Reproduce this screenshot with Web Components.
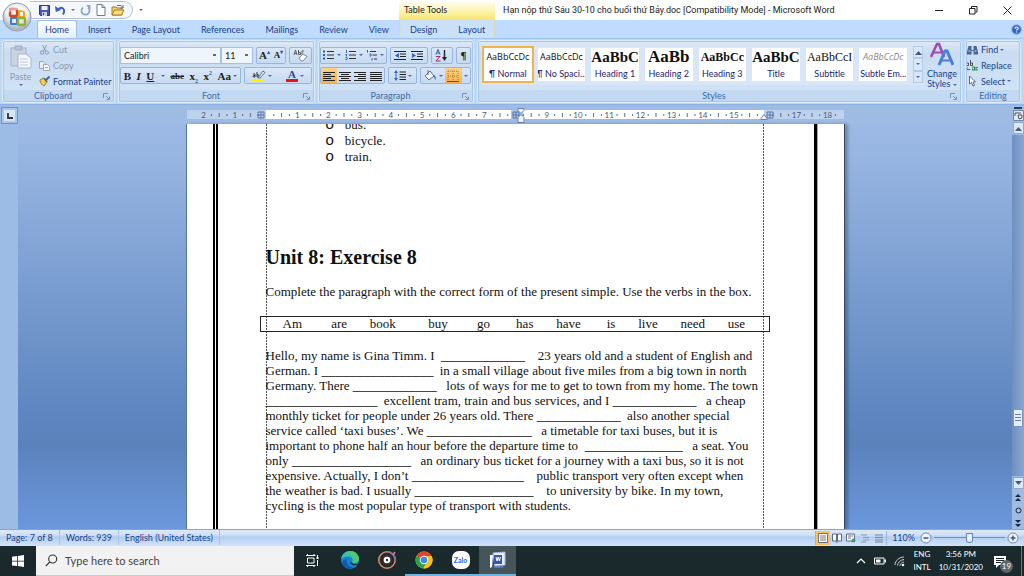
<!DOCTYPE html>
<html lang="en">
<head>
<meta charset="utf-8">
<title>Microsoft Word</title>
<style>
  html, body {
    margin: 0;
    height: 100%;
  }

  body {
    overflow: hidden;
    font-family: Lato, "Open Sans", sans-serif;
    font-size: 9px;
    color: #15428b;
  }
</style>
</head>
<body>
<word-desktop></word-desktop>

<script>
const svg = (w, h, body) => /* html */ `<svg width="${w}" height="${h}" viewBox="0 0 ${w} ${h}" fill="none" aria-hidden="true">${body}</svg>`;
const lines = (w, list, color = '#222') => svg(w, 10, list.map(([x1, x2], i) => `<path d="M${x1} ${i * 2 + 1.5}H${x2}" stroke="${color}" stroke-width="1"/>`).join(''));

const ICONS = {
  office: svg(32, 32, `
    <defs><radialGradient id="g" cx=".5" cy=".3" r=".75"><stop stop-color="#fff"/><stop offset=".55" stop-color="#e3e6ea"/><stop offset=".85" stop-color="#a9b2bf"/><stop offset="1" stop-color="#eef3f8"/></radialGradient></defs>
    <circle cx="16" cy="16" r="14" fill="url(#g)" stroke="#8c9aae"/>
    <g stroke-width="2.4" stroke-linejoin="round">
      <rect x="9" y="8" width="7" height="7" rx="1" stroke="#d8421c"/>
      <path d="M18 10h5v6h-5z" stroke="#f2a01e" stroke-width="2"/>
      <path d="M10 17h6v6h-6z" stroke="#3b7fd0" stroke-width="2"/>
      <rect x="17" y="17" width="7" height="7" rx="1" stroke="#8fb52d"/>
    </g>
    <path d="M5 13a12 9 0 0 1 22 0" stroke="#fff" stroke-opacity=".5" stroke-width="3"/>`),
  save: svg(11, 11, '<path d="M.5.5h10v10h-9l-1-1z" fill="#4a55b8" stroke="#2d3590"/><path d="M2.500 1h6v4h-6z" fill="#eef2fb"/><path d="M3 7h5v4H3z" fill="#c9cfe4"/><path d="M4 8h1v2H4z" fill="#2d3590"/>'),
  undo: svg(11, 11, '<path d="M3 4.500C7 1 11 4 8 9.500" stroke="#3b62bd" stroke-width="2"/><path d="M0 1l.8 6L6 5z" fill="#3b62bd"/>'),
  redo: svg(11, 11, '<path d="M3 2.500a4 4 0 1 0 5 0" stroke="#8ba6d0" stroke-width="1.800"/><path d="M6 0h4.500v4.500z" fill="#8ba6d0"/>'),
  page: svg(10, 12, '<path d="M1 .5h5l3 3v8H1z" fill="#fff" stroke="#6d7c92"/><path d="M6 .5v3h3" stroke="#6d7c92"/>'),
  open: svg(14, 12, '<path d="M1 3h4l1 1h5v7H1z" fill="#f6cf6a" stroke="#a77b22"/><path d="M1 11l2.500-5H13l-2.500 5z" fill="#fde08a" stroke="#a77b22"/><path d="M6 1.500h4l2 2M12 1v3H9.500" stroke="#5a6f94"/>'),
  paste: svg(22, 24, '<path d="M1 3h15v18H1z" fill="#c9d3e2" stroke="#a6b4c9"/><path d="M5 1h7v4H5z" fill="#b6c2d4" stroke="#a0aec3"/><path d="M8 9h8l5 4v10H8z" fill="#f3f6fb" stroke="#a9b6c9"/><path d="M10 14h8M10 17h8M10 20h8" stroke="#c2ccda"/>'),
  cut: svg(10, 10, '<path d="M3 0l3 6M7 0L4 6" stroke="#8a99af"/><circle cx="2.500" cy="7.500" r="1.700" stroke="#8a99af"/><circle cx="7.300" cy="7.500" r="1.700" stroke="#8a99af"/>'),
  copy: svg(11, 10, '<path d="M.5.5h4l1.500 2v5H.5z" fill="#e8eef7" stroke="#9aa9be"/><path d="M4.500 3.500h4l2 2v4h-6z" fill="#f5f8fc" stroke="#9aa9be"/><path d="M6 6.500h3" stroke="#9aa9be"/>'),
  painter: svg(11, 11, '<path d="M1 4l4-2 3 4-3 4C3 9 1 7 1 4z" fill="#f2cd5c" stroke="#a97e1f"/><path d="M5 2l3 4" stroke="#666" stroke-width="1.500"/><path d="M7 4l3.500-3.500" stroke="#3c62a8" stroke-width="2"/>'),
  eraser: svg(15, 13, '<path d="M1 6l1.500-5L4 6M1.500 4.500h2M5.500 1v4.500M5.500 3.500h2v2h-2M11 2H9v3.500h2" stroke="#555" stroke-width=".9"/><path d="M6 9l4-4 4 2.500-4 4.500H8z" fill="#fff" stroke="#7a879b"/>'),
  highlight: svg(14, 12, '<path d="M0 9h11v3H0z" fill="#fdf400"/><path d="M6 8l5-7 2 1.500L8 8z" fill="#f5f8ff" stroke="#4f6694"/><path d="M1 4.500c1-1 2-1 2 0v2.500H1.500c-1-1 0-1.700 1.500-1.500M5 2v5M5 5c2-2 2 2 0 2" stroke="#222" stroke-width=".9"/>'),
  bullets: svg(12, 10, '<path d="M0 1.500h2M0 5h2M0 8.500h2" stroke="#2f5aa8" stroke-width="2"/><path d="M4 1.500h7M4 5h7M4 8.500h7" stroke="#333"/>'),
  numbering: svg(12, 10, '<path d="M1.500 0v3M.5 4.500h1.500l-1 1.500h1M.5 7.500h1.500v2H.5" stroke="#2f5aa8" stroke-width=".9"/><path d="M4 1.500h7M4 5h7M4 8.500h7" stroke="#333"/>'),
  multilevel: svg(12, 11, '<path d="M1.500 0v2.500M3.500 4h1.500v2H3.500M6 8v2.500" stroke="#2f5aa8"/><path d="M4 1.500h6M6.500 5H11M8 9h3" stroke="#333"/>'),
  outdent: svg(13, 11, '<path d="M0 1.500h12M6 4h6M6 6.500h6M0 9.500h12" stroke="#222" stroke-width="1.200"/><path d="M5 3L1 5.500 5 8z" fill="#3566bd"/>'),
  indent: svg(13, 11, '<path d="M0 1.500h12M6 4h6M6 6.500h6M0 9.500h12" stroke="#222" stroke-width="1.200"/><path d="M1 3l4 2.500L1 8z" fill="#3566bd"/>'),
  sort: svg(13, 13, '<path d="M1 5.500L3 .5l2 5M1.800 4h2.400" stroke="#2f5aa8"/><path d="M1 7.500h4l-4 4.500h4.500" stroke="#a02f63"/><path d="M9.500 1v9" stroke="#222" stroke-width="1.400"/><path d="M7 8l2.500 4L12 8z" fill="#222"/>'),
  left: lines(12, [[0, 12], [0, 8], [0, 12], [0, 8], [0, 12]]),
  center: lines(12, [[0, 12], [2, 10], [0, 12], [2, 10], [0, 12]]),
  right: lines(12, [[0, 12], [4, 12], [0, 12], [4, 12], [0, 12]]),
  justify: lines(12, [[0, 12], [0, 12], [0, 12], [0, 12], [0, 12]]),
  spacing: svg(12, 11, '<path d="M2 2v7" stroke="#3566bd"/><path d="M0 3l2-3 2 3zM0 8l2 3 2-3z" fill="#3566bd"/><path d="M5.500 2H12M5.500 4.500H12M5.500 7H12M5.500 9.500H12" stroke="#222"/>'),
  shading: svg(14, 11, '<path d="M2 6l5-5 4 5-5 4z" fill="#f3f6fb" stroke="#5e6d85"/><path d="M5 0v5" stroke="#5e6d85"/><path d="M11 5c2 1 2 3 1.500 5C11 8 11 7 11 5z" fill="#3d6cc0"/>'),
  borders: svg(12, 12, '<path d="M1 1h10M1 6h10M1 1v10M6 1v10M11 1v10" stroke="#a8752b" stroke-dasharray="1 1"/><path d="M0 11.500h12" stroke="#7a4a10"/>'),
  styles: svg(24, 26, '<path d="M1 15L7 2h2l5 13" stroke="#a04bb5" stroke-width="2.600"/><path d="M4 10.500h7" stroke="#a04bb5" stroke-width="2"/><path d="M9 23l6-14h2l6 14" stroke="#4a7fd2" stroke-width="3"/><path d="M12 18.500h8" stroke="#4a7fd2" stroke-width="2"/>'),
  find: svg(12, 10, '<path d="M2 1h3v4H7V1h3l1.500 6v2.500H7V6H5v3.500H.5V7z" fill="#4a6394"/><path d="M2 6h2M8 6h2" stroke="#dce8f8"/>'),
  replace: svg(13, 11, '<path d="M0 3h2.500v2.500H.5V4.500M4.500 0v5.500h2v-2.500h-2" stroke="#444" stroke-width=".9"/><path d="M1 7v2.500h3" stroke="#3566bd"/><path d="M6 7h2.500v3H6.500V8.500M12 7.500h-2V10h2" stroke="#2c8a4b" stroke-width="1.100"/>'),
  select: svg(10, 12, '<path d="M2 1v8l2-1.500L5.500 11 7 10.500 5.500 7H8z" fill="#fff" stroke="#5d6e8c"/>'),
  launcher: svg(7, 7, '<path d="M.5 5V.5H5" stroke="#7592bd"/><path d="M3 3l3 3M6.500 3.500v3h-3" stroke="#7592bd"/>'),
  help: svg(11, 11, '<circle cx="5.500" cy="5.500" r="4.800" fill="#2f66c4" stroke="#91b3e8"/><path d="M4 4.500c0-2 3.200-2 3.200 0 0 1-1.700 1-1.700 2M5.500 7.500v1" stroke="#fff" stroke-width="1.200"/>'),
  minimize: svg(9, 9, '<path d="M0 4.500h8" stroke="#222"/>'),
  restore: svg(9, 9, '<path d="M.5 2.500h5.500v5.500H.500zM2.500 2V.5H8V6H6.500" stroke="#222"/>'),
  close: svg(9, 9, '<path d="M.5.500l8 8M8.500.5l-8 8" stroke="#222"/>'),
  tabstop: svg(6, 6, '<path d="M1 0v5h5" stroke="#333" stroke-width="1.800"/>'),
  rulerToggle: svg(11, 11, '<path d="M.5.500h10v10H.500z" fill="#dfe9f6" stroke="#6e87ad"/><path d="M2 3h6M2 3v3M5 5h4v3L6 9z" stroke="#555"/>'),
  up: svg(7, 5, '<path d="M0 5l3.500-4L7 5z" fill="#46597d"/>'),
  down: svg(7, 5, '<path d="M0 0l3.500 4L7 0z" fill="#46597d"/>'),
  prev: svg(6, 7, '<path d="M0 3l3-3 3 3zM0 7l3-3 3 3z" fill="#1c2638"/>'),
  next: svg(6, 7, '<path d="M0 0l3 3 3-3zM0 4l3 3 3-3z" fill="#1c2638"/>'),
  browse: svg(7, 7, '<circle cx="3.500" cy="3.500" r="2.500" fill="#aebbd0" stroke="#1c2638"/>'),
  print: svg(10, 10, '<path d="M.5.500h9v9h-9z" fill="#fff" stroke="#66707f"/><path d="M2 3h6M2 5h6M2 7h6" stroke="#777"/>'),
  reading: svg(10, 10, '<path d="M.5 1h4v7h-4zM5.500 1h4v7h-4z" fill="#fff" stroke="#5a6b8a"/><path d="M5 8v2" stroke="#5a6b8a"/>'),
  web: svg(10, 10, '<path d="M.5 1h8v7h-8z" fill="#fff" stroke="#5a6b8a"/><path d="M2 3h5M2 5h3" stroke="#777"/><circle cx="7.500" cy="7.500" r="2" fill="#3a9c68"/>'),
  outline: svg(10, 10, '<path d="M1 2h6M3 4.500h6M3 7h6M1 9h5" stroke="#8d99ad"/>'),
  draft: svg(10, 10, '<path d="M1 2h8M1 4.500h8M1 7h8M1 9h8" stroke="#76849c"/>'),
  minus: svg(12, 12, '<circle cx="6" cy="6" r="5" fill="#f1f6fd" stroke="#6f87ae"/><path d="M3.500 6h5" stroke="#3c5582" stroke-width="1.500"/>'),
  plus: svg(12, 12, '<circle cx="6" cy="6" r="5" fill="#f1f6fd" stroke="#6f87ae"/><path d="M3.500 6h5M6 3.500v5" stroke="#3c5582" stroke-width="1.500"/>'),
  windows: svg(12, 12, '<path d="M0 1.700l5-.7v4.700H0zM5.800.9L12 0v5.700H5.800zM0 6.400h5v4.700l-5-.7zM5.800 6.400H12V12l-6.200-.9z" fill="#fff"/>'),
  search: svg(13, 13, '<circle cx="7.700" cy="5" r="4" stroke="#333" stroke-width="1.100"/><path d="M4.800 8L.8 12" stroke="#333" stroke-width="1.100"/>'),
  taskview: svg(13, 13, '<path d="M1.500 4h6.500v5H1.500zM0 1.500h9.500M0 11.500h9.500M1.500 0v2M8 0v2M1.500 11v2M8 11v2M11.500 1v2M11.500 6v6" stroke="#fff"/><path d="M10.500 3h2v2h-2z" fill="#fff"/>'),
  edge: svg(20, 20, '<circle cx="10" cy="10" r="9" fill="#1581cf"/><path d="M1.200 9C2 3.500 6 1 10 1c6 0 9 4.500 9 8 0 4-5 5-7 3 1.500-2.500 0-5.500-3.500-5.500C5 6.500 2 8 1.200 9z" fill="#35c1b0"/><path d="M10 1c6 0 9 4.500 9 8 0 3-3 4.500-5.500 3.800 1.500-4-1-9.300-7.500-9.800z" fill="#5cc95b" opacity=".7"/><path d="M7 9c-1.500 4 1.500 8 6 8.500-4 2.500-10 .5-11-4.500C3 10 5 9 7 9z" fill="#0f5aa8"/><path d="M10.500 11.500c-.8 2.500 2 4 4.500 3.700 1.500-.2 2.500-.8 3-1.600-2 .9-5.500.6-6-.9-.6-.3-1.200-.7-1.500-1.200z" fill="#1a292c"/>'),
  groove: svg(20, 20, '<circle cx="10" cy="10" r="8.200" stroke="#d88a5d" stroke-width="1.600"/><path d="M10 1.800A8.200 8.200 0 0 1 18 12" stroke="#9a6a8c" stroke-width="1.800"/><circle cx="10" cy="10" r="5.500" fill="#3a2b33"/><circle cx="10" cy="10" r="3.300" fill="#fff"/><circle cx="10" cy="10" r="1.200" fill="#333"/><path d="M16 5l2-3" stroke="#b98aa5" stroke-width="1.500"/>'),
  chrome: svg(18, 18, '<circle cx="9" cy="9" r="8.500" fill="#fbc116"/><path d="M9 9L1.600 4.800A8.500 8.500 0 0 1 16.500 5z" fill="#e24133"/><path d="M9 9L1.600 4.800A8.500 8.500 0 0 0 8 17.500l4-7z" fill="#2ba24c"/><path d="M9 5h7.600a8.500 8.500 0 0 1-8 12.500L12.500 11z" fill="#fbc116"/><circle cx="9" cy="9" r="4.200" fill="#fff"/><circle cx="9" cy="9" r="3.300" fill="#4384f3"/>'),
  word: svg(18, 18, '<path d="M4 2l12-1v13l-10 1z" fill="#e8eefb" stroke="#aab9dd"/><path d="M5 4h8v9H5z" fill="#3559b0"/><path d="M7 6l1 4 1.200-4 1.200 4 1-4" stroke="#fff"/><path d="M1 4h3l-1 12-2 1z" fill="#fff"/><path d="M4 15.500l9-1 2 2-9 .5z" fill="#5d7fd0"/>'),
  chevron: svg(10, 6, '<path d="M1 5l4-4 4 4" stroke="#fff" stroke-width="1.200"/>'),
  battery: svg(12, 8, '<path d="M.5 1h9.500v6H.500z" stroke="#fff"/><path d="M2 2.500h4.500v3H2zM10.500 2.500h1.500v3h-1.500z" fill="#fff"/>'),
  wifi: svg(11, 11, '<path d="M1 9C1 5 5 1 10 1M3.500 9.500C4 6.500 6 4 10 3.500M6 10c0-2 2-4 4-4" stroke="#c9cfd1"/><circle cx="9" cy="9" r="1.300" fill="#fff"/>'),
  notes: svg(14, 13, '<path d="M1 1h12v9H6l-3 3v-3H1z" fill="#fff"/><path d="M3 3.500h8M3 5.500h8M3 7.500h5" stroke="#1a282b"/>')
};

const icon = name => ICONS[name];
const arrow = /* html */ `<i class="arrow"></i>`;

const BASE = /* css */ `
  * {
    box-sizing: border-box;
  }

  svg {
    display: block;
    flex: none;
  }

  button {
    font: inherit;
    color: inherit;
    background: none;
    border: 0;
    margin: 0;
    padding: 0;
    display: flex;
    align-items: center;
    justify-content: center;
    white-space: nowrap;
  }

  .arrow {
    display: inline-block;
    flex: none;
    border: 2px solid transparent;
    border-top-color: #4c6c9f;
    border-bottom: 0;
    vertical-align: middle;
  }
`;

class BaseElement extends HTMLElement {
  constructor() {
    super();
    this.attachShadow({ mode: 'open' });
  }

  connectedCallback() {
    this.shadowRoot.innerHTML = /* html */ `
    <style>${BASE}${this.constructor.styles}</style>
    ${this.template()}`;
  }
}

class TitleBar extends BaseElement {
  static get styles() {
    return /* css */ `
      :host {
        display: flex;
        height: 20px;
        background: #fff;
        color: #222;
        position: relative;
      }

      .office {
        position: absolute;
        left: 1px;
        top: 1px;
        z-index: 2;
      }

      .quick {
        flex: 0 0 399px;
        padding-left: 30px;
        display: flex;
        align-items: center;
        gap: 6px;
      }

      .pill {
        display: flex;
        align-items: center;
        gap: 5px;
        height: 18px;
        padding: 0 7px 0 9px;
        background: #f4f8fd;
        border: 1px solid #b5bfcd;
        border-left: 0;
        border-radius: 0 9px 9px 0;
      }

      .context {
        flex: 0 0 96px;
        padding-left: 5px;
        line-height: 20px;
        background: linear-gradient(#fff, #fdf3a8 60%, #f8e36e);
      }

      h1 {
        flex: 1;
        margin: 0;
        padding-left: 8px;
        font: 9px/20px Roboto, sans-serif;
        white-space: nowrap;
      }

      .window {
        display: flex;
      }

      .window button {
        width: 34px;
      }
    `;
  }

  template() {
    return /* html */ `
    <button class="office" aria-label="Office">${icon('office')}</button>
    <div class="quick">
      <div class="pill">
        <button aria-label="Save">${icon('save')}</button>
        <button aria-label="Undo">${icon('undo')}</button>
        ${arrow}
        <button aria-label="Redo">${icon('redo')}</button>
        <button aria-label="New">${icon('page')}</button>
        <button aria-label="Open">${icon('open')}</button>
      </div>
      ${arrow}
    </div>
    <div class="context">Table Tools</div>
    <h1>Hạn nộp thứ Sáu 30-10 cho buổi thứ Bảy.doc [Compatibility Mode] - Microsoft Word</h1>
    <div class="window">
      <button aria-label="Minimize">${icon('minimize')}</button>
      <button aria-label="Restore">${icon('restore')}</button>
      <button aria-label="Close">${icon('close')}</button>
    </div>`;
  }
}

class RibbonTabs extends BaseElement {
  static get styles() {
    return /* css */ `
      :host {
        display: flex;
        height: 18px;
        padding: 0 2px 0 37px;
        background: #bfdbff;
      }

      nav, .context {
        display: flex;
      }

      nav {
        flex: 0 0 362px;
        min-width: 0;
      }

      .context {
        flex: 0 0 96px;
        background: linear-gradient(90deg, #d9d8a8, #c9e0f8 2px, #c9e0f8 94px, #d9d8a8);
      }

      button {
        padding: 0 10px 0 11px;
      }

      button.active {
        padding: 0 7px;
        background: linear-gradient(#fff, #e3eefb);
        border: 1px solid #9fc0ea;
        border-bottom: 0;
        border-radius: 3px 3px 0 0;
      }

      .help {
        margin-left: auto;
        padding: 0;
      }
    `;
  }

  template() {
    const tabs = ['Home', 'Insert', 'Page Layout', 'References', 'Mailings', 'Review', 'View'];
    return /* html */ `
    <nav>${tabs.map((t, i) => `<button class="${i ? '' : 'active'}">${t}</button>`).join('')}</nav>
    <div class="context"><button>Design</button><button>Layout</button></div>
    <button class="help" aria-label="Help">${icon('help')}</button>`;
  }
}

class RibbonGroup extends BaseElement {
  static get styles() {
    return /* css */ `
      :host {
        display: flex;
        flex-direction: column;
        border: 1px solid #dcecfb;
        outline: 1px solid #a9c6e6;
        outline-offset: -2px;
        border-radius: 3px;
        background: linear-gradient(#dde9f6, #c9dcf1 20%, #d3e4f7);
        overflow: hidden;
      }

      .body {
        flex: 1;
        display: flex;
        min-height: 0;
      }

      footer {
        height: 12px;
        display: flex;
        align-items: center;
        background: #c2d9f1;
        color: #3e6aaa;
      }

      footer span {
        flex: 1;
        line-height: 12px;
        text-align: center;
      }

      footer button {
        padding-right: 4px;
      }
    `;
  }

  template() {
    const name = this.getAttribute('name');
    const launcher = this.hasAttribute('plain') ? '' : `<button aria-label="${name} options">${icon('launcher')}</button>`;
    return /* html */ `
    <div class="body"><slot></slot></div>
    <footer><span>${name}</span>${launcher}</footer>`;
  }
}

class StyleCard extends BaseElement {
  static get styles() {
    return /* css */ `
      :host {
        flex: 1 1 0;
        min-width: 0;
        display: block;
      }

      button {
        width: 100%;
        height: 100%;
        flex-direction: column;
        justify-content: flex-end;
        background: #fff;
        overflow: hidden;
      }

      :host([active]) button {
        outline: 2px solid #f0b44c;
      }

      .sample {
        color: #111;
      }

      :host([faded]) .sample {
        color: #888;
      }

      .name {
        line-height: 14px;
        color: #1d1d6b;
      }
    `;
  }

  template() {
    return /* html */ `
    <button>
      <span class="sample" style="font:${this.getAttribute('face')}">${this.getAttribute('sample')}</span>
      <span class="name">${this.getAttribute('name')}</span>
    </button>`;
  }
}

class WordRibbon extends BaseElement {
  static get styles() {
    return /* css */ `
      :host {
        display: flex;
        gap: 3px;
        height: 67px;
        padding: 1px 3px 1px 2px;
        background: #bcd8f5;
        border-top: 1px solid #9fc4ee;
        border-bottom: 1px solid #8db2e3;
      }

      .clipboard { flex: 0 0 113px; }
      .font { flex: 0 0 197px; }
      .paragraph { flex: 0 0 156px; }
      .styles { flex: 1; min-width: 0; }
      .editing { flex: 0 0 56px; }

      .paste {
        flex: 0 0 35px;
        flex-direction: column;
        gap: 2px;
        color: #8d9bb0;
      }

      .stack {
        display: flex;
        flex-direction: column;
        justify-content: space-around;
        padding: 1px 0;
      }

      .stack button {
        justify-content: flex-start;
        gap: 2px;
        height: 16px;
      }

      .stack button svg {
        width: 13px;
      }

      .stack button[disabled] {
        color: #8d9bb0;
      }

      .rows {
        flex: 1;
        display: flex;
        flex-direction: column;
        justify-content: space-evenly;
        padding: 2px 2px 2px 1px;
      }

      .row {
        display: flex;
        gap: 3px;
        height: 17px;
      }

      .set {
        flex: 1 1 auto;
        display: flex;
        justify-content: space-around;
        align-items: stretch;
        border: 1px solid #98b5dc;
        border-radius: 2px;
        background: linear-gradient(#d9e7f7, #c6daf1);
      }

      .set button {
        flex: 1 1 auto;
        gap: 2px;
        padding: 0 1px;
        color: #222;
        font-family: "Liberation Serif", serif;
        font-size: 11px;
      }

      .set button.on {
        background: linear-gradient(#fbd28a, #f9b24b);
      }

      .set button.small {
        font-size: 9px;
      }

      sup, sub {
        font-size: 6px;
        line-height: 0;
        color: #2f5aa8;
      }

      .letter {
        border-bottom: 3px solid #e11;
        line-height: 9px;
        padding: 0 2px;
        color: #2b4c8c;
      }

      select {
        appearance: none;
        font: inherit;
        color: #222;
        height: 17px;
        margin: 0;
        padding: 0 3px;
        border: 1px solid #a8c0e0;
        border-radius: 0;
        background: #eef5fd linear-gradient(#4c6c9f, #4c6c9f) no-repeat right 4px center / 3px 2px;
      }

      .face {
        flex: 0 0 101px;
      }

      .size {
        flex: 0 0 32px;
        margin-left: -3px;
      }

      .gallery {
        flex: 1;
        min-width: 0;
        display: flex;
        gap: 6px;
        margin: 4px 0 5px 3px;
        padding: 3px 0 4px 3px;
        background: #d8e6f7;
      }

      .scroll {
        flex: 0 0 10px;
        display: flex;
        flex-direction: column;
        margin: -2px 0;
      }

      .scroll button {
        flex: 1;
        border: 1px solid #b4cbe8;
        background: #d9e7f7;
      }

      .change {
        flex: 0 0 38px;
        flex-direction: column;
        line-height: 10px;
        gap: 1px;
      }
    `;
  }

  template() {
    const sans = '9px/20px Open Sans, sans-serif';
    const serif = (size, weight = 'bold') => `${weight} ${size}px/20px Liberation Serif, serif`;
    const cards = [
      ['¶ Normal', 'AaBbCcDc', sans, 'active'],
      ['¶ No Spaci...', 'AaBbCcDc', sans, ''],
      ['Heading 1', 'AaBbC', serif(15), ''],
      ['Heading 2', 'AaBb', serif(17), ''],
      ['Heading 3', 'AaBbCc', serif(12), ''],
      ['Title', 'AaBbC', serif(15), ''],
      ['Subtitle', 'AaBbCcI', serif(12, 'normal'), ''],
      ['Subtle Em...', 'AaBbCcDc', `italic ${sans}`, 'faded']
    ];
    return /* html */ `
    <ribbon-group class="clipboard" name="Clipboard">
      <button class="paste" disabled>${icon('paste')}Paste${arrow}</button>
      <div class="stack">
        <button disabled>${icon('cut')}Cut</button>
        <button disabled>${icon('copy')}Copy</button>
        <button>${icon('painter')}Format Painter</button>
      </div>
    </ribbon-group>

    <ribbon-group class="font" name="Font">
      <div class="rows">
        <div class="row">
          <select class="face" aria-label="Font"><option>Calibri</option></select>
          <select class="size" aria-label="Font size"><option>11</option></select>
          <div class="set">
            <button aria-label="Grow font"><b>A<sup>▴</sup></b></button>
            <button class="small" aria-label="Shrink font"><b>A<sup>▾</sup></b></button>
          </div>
          <div class="set"><button aria-label="Clear formatting">${icon('eraser')}</button></div>
        </div>
        <div class="row">
          <div class="set">
            <button><b>B</b></button>
            <button><b><i>I</i></b></button>
            <button><b><u>U</u></b>&nbsp;${arrow}</button>
            <button class="small"><b><s>abe</s></b></button>
            <button><b>x<sub>2</sub></b></button>
            <button><b>x<sup>2</sup></b></button>
            <button><b>Aa</b>${arrow}</button>
          </div>
          <div class="set">
            <button aria-label="Highlight">${icon('highlight')}${arrow}</button>
            <button aria-label="Font color"><b class="letter">A</b>${arrow}</button>
          </div>
        </div>
      </div>
    </ribbon-group>

    <ribbon-group class="paragraph" name="Paragraph">
      <div class="rows">
        <div class="row">
          <div class="set">
            <button aria-label="Bullets">${icon('bullets')}${arrow}</button>
            <button aria-label="Numbering">${icon('numbering')}${arrow}</button>
            <button aria-label="Multilevel list">${icon('multilevel')}${arrow}</button>
          </div>
          <div class="set">
            <button aria-label="Decrease indent">${icon('outdent')}</button>
            <button aria-label="Increase indent">${icon('indent')}</button>
          </div>
          <div class="set"><button aria-label="Sort">${icon('sort')}</button></div>
          <div class="set"><button><b>¶</b></button></div>
        </div>
        <div class="row">
          <div class="set">
            <button class="on" aria-label="Align left">${icon('left')}</button>
            <button aria-label="Center">${icon('center')}</button>
            <button aria-label="Align right">${icon('right')}</button>
            <button aria-label="Justify">${icon('justify')}</button>
          </div>
          <div class="set"><button aria-label="Line spacing">${icon('spacing')}${arrow}</button></div>
          <div class="set">
            <button aria-label="Shading">${icon('shading')}${arrow}</button>
            <button class="on" aria-label="Borders">${icon('borders')}</button>
            <button aria-label="More borders">${arrow}</button>
          </div>
        </div>
      </div>
    </ribbon-group>

    <ribbon-group class="styles" name="Styles">
      <div class="gallery">
        ${cards.map(([name, sample, face, flag]) => `<style-card name="${name}" sample="${sample}" face="${face}" ${flag}></style-card>`).join('')}
        <div class="scroll">
          <button aria-label="Row up">${icon('up')}</button>
          <button aria-label="Row down">${arrow}</button>
          <button aria-label="More">${arrow}</button>
        </div>
      </div>
      <button class="change">${icon('styles')}<span>Change<br>Styles ${arrow}</span></button>
    </ribbon-group>

    <ribbon-group class="editing" name="Editing" plain>
      <div class="stack">
        <button>${icon('find')}Find ${arrow}</button>
        <button>${icon('replace')}Replace</button>
        <button>${icon('select')}Select ${arrow}</button>
      </div>
    </ribbon-group>`;
  }
}

class WordRuler extends BaseElement {
  static get styles() {
    return /* css */ `
      :host {
        display: block;
        width: var(--page-width);
      }

      text {
        font-size: 8px;
        fill: #4d5a70;
        text-anchor: middle;
      }
    `;
  }

  template() {
    const origin = 79;
    const cm = 31.2;
    let marks = '';
    for (let n = -2; n <= 18; n++) {
      const x = origin + n * cm;
      if (n !== 0 && n !== 8 && n !== 16) {
        marks += `<text x="${x}" y="13">${Math.abs(n)}</text>`;
      }
      if (n < 18) {
        marks += `<path d="M${x + cm / 2} 8v4" stroke="#5d6b84"/>`;
        marks += `<path d="M${x + cm * .75} 9v2" stroke="#5d6b84"/>`;
      }
      marks += `<path d="M${x + cm / 4} 9v2" stroke="#5d6b84"/>`;
    }
    const table = x => `<path d="M${x} 7h6v6h-6zM${x + 3} 7v6M${x} 10h6" stroke="#5673a8"/>`;
    return svg(657, 19, `
      <path d="M0 5h657v9H0z" fill="#bcd2ef"/>
      <path d="M79 5h498v9H79z" fill="#fff"/>
      <path d="M324 5h12v9h-12z" fill="#a9c5ee"/>
      ${marks}${table(71)}${table(326)}${table(580)}
      <path d="M331 3.500h6v2l-3 3-3-3zM331 14.500v-2l3-3 3 3v5h-6zM574 14.500v-1l3-4 3 4v1z" fill="#eef3fb" stroke="#6a82ac"/>`);
  }
}

class FillIn extends BaseElement {
  static get styles() {
    return /* css */ `
      :host {
        display: inline-block;
        padding-right: 3px;
        font-size: 14px;
      }
    `;
  }

  template() {
    return '_'.repeat(Number(this.getAttribute('length')));
  }
}

class DocPage extends BaseElement {
  static get styles() {
    return /* css */ `
      :host {
        display: block;
        width: var(--page-width);
        height: 100%;
        padding: 0 27px 0 26px;
        background: #fff;
        box-shadow: 1px 0 0 #34495f, 4px 0 3px #0004, -1px 0 0 #5874a0;
        overflow: hidden;
        font: 13px/15px "Liberation Serif", serif;
        color: #111;
      }

      .frame {
        height: 100%;
        border-left: 5px double #000;
        border-right: 3px solid #000;
        box-shadow: 1px 0 0 #aaa;
        padding: 0 50px 0 48px;
      }

      .cell {
        height: 100%;
        background:
          repeating-linear-gradient(#555 0 2px, transparent 2px 3px) left / 1px 100% no-repeat,
          repeating-linear-gradient(#555 0 2px, transparent 2px 3px) right / 1px 100% no-repeat;
        white-space: nowrap;
      }

      ul {
        list-style: none;
        margin: 0;
        padding: 0 0 0 60px;
        position: relative;
        top: -7px;
        line-height: 16px;
      }

      li {
        display: flex;
        align-items: baseline;
        gap: 11px;
      }

      li span {
        font: 15px/14px "Liberation Sans", sans-serif;
      }

      h2 {
        margin: 70px 0 0;
        font-size: 20px;
        line-height: 30px;
      }

      p {
        margin: 12px 0 0;
      }

      .verbs {
        margin: 17px -6px 16px -6px;
        padding: 0 22px;
        border: 1px solid #222;
        line-height: 14px;
        white-space: pre;
      }
    `;
  }

  template() {
    const blank = n => `<fill-in length="${n}"></fill-in>`;
    return /* html */ `
    <div class="frame"><div class="cell">
      <ul>
        <li><span>o</span>bus.</li>
        <li><span>o</span>bicycle.</li>
        <li><span>o</span>train.</li>
      </ul>
      <h2>Unit 8: Exercise 8</h2>
      <p>Complete the paragraph with the correct form of the present simple. Use the verbs in the box.</p>
      <div class="verbs">Am         are       book          buy         go        has       have        is       live       need       use</div>
      <p>
        Hello, my name is Gina Timm. I &nbsp;${blank(12)} &nbsp; 23 years old and a student of English and<br>
        German. I ${blank(16)} in a small village about five miles from a big town in north<br>
        Germany. There ${blank(12)} &nbsp;lots of ways for me to get to town from my home. The town<br>
        ${blank(16)} excellent tram, train and bus services, and I ${blank(12)} &nbsp;a cheap<br>
        monthly ticket for people under 26 years old. There ${blank(12)} also another special<br>
        service called ‘taxi buses’. We ${blank(15)} &nbsp;a timetable for taxi buses, but it is<br>
        important to phone half an hour before the departure time to &nbsp;${blank(14)} &nbsp;a seat. You<br>
        only ${blank(17)} &nbsp;an ordinary bus ticket for a journey with a taxi bus, so it is not<br>
        expensive. Actually, I don’t ${blank(16)} &nbsp; public transport very often except when<br>
        the weather is bad. I usually ${blank(17)} &nbsp; to university by bike. In my town,<br>
        cycling is the most popular type of transport with students.
      </p>
    </div></div>`;
  }
}

class ScrollBar extends BaseElement {
  static get styles() {
    return /* css */ `
      :host {
        flex: 0 0 12px;
        display: flex;
        flex-direction: column;
        align-items: center;
        gap: 1px;
        padding-top: 2px;
        background: #9ebbe4;
      }

      .split {
        width: 8px;
        height: 2px;
        background: #2c3c5c;
      }

      .end {
        width: 11px;
        height: 12px;
        background: #dbe8f8;
        border: 1px solid #8fa9ce;
      }

      .track {
        flex: 1;
        width: 12px;
        padding: 0 1px;
        background: linear-gradient(90deg, #6e8fbf, #89a7d2);
        display: grid;
        grid-template-rows: 273fr 18px 49fr;
      }

      .thumb {
        grid-row: 2;
        border: 1px solid #7d96bb;
        background: repeating-linear-gradient(#6c7f9f 0 1px, transparent 1px 3px) center / 6px 7px no-repeat, #e6eef9;
      }

      nav {
        display: flex;
        flex-direction: column;
        align-items: center;
        gap: 6px;
        padding: 4px 0 2px;
      }
    `;
  }

  template() {
    return /* html */ `
    <div class="split"></div>
    <button aria-label="View ruler">${icon('rulerToggle')}</button>
    <button class="end" aria-label="Scroll up">${icon('up')}</button>
    <div class="track"><div class="thumb"></div></div>
    <button class="end" aria-label="Scroll down">${icon('down')}</button>
    <nav>
      <button aria-label="Previous">${icon('prev')}</button>
      <button aria-label="Browse object">${icon('browse')}</button>
      <button aria-label="Next">${icon('next')}</button>
    </nav>`;
  }
}

class WordWorkspace extends BaseElement {
  static get styles() {
    return /* css */ `
      :host {
        --page-width: 657px;
        flex: 1;
        min-height: 0;
        display: flex;
        background: linear-gradient(#9dbce6, #97b5e1 12%, #5e86c0 72%, #5b82bb 80%, #6b97dc);
      }

      .well {
        flex: 0 0 18px;
        background: #9cbbe5;
      }

      .well button {
        width: 17px;
        height: 17px;
        margin: 2px 0 0 1px;
        border: 1px solid #7190c0;
        background: #d5e4f7;
        box-shadow: inset 0 0 0 2px #a9c5ec;
      }

      main {
        flex: 1;
        min-width: 0;
        display: grid;
        grid-template-rows: 19px 1fr;
        justify-items: center;
      }

      .band {
        width: 100%;
        display: flex;
        justify-content: center;
        background: #9ebbe4;
      }
    `;
  }

  template() {
    return /* html */ `
    <div class="well"><button aria-label="Left tab">${icon('tabstop')}</button></div>
    <main>
      <div class="band"><word-ruler></word-ruler></div>
      <doc-page></doc-page>
    </main>
    <scroll-bar></scroll-bar>`;
  }
}

class StatusBar extends BaseElement {
  static get styles() {
    return /* css */ `
      :host {
        display: flex;
        align-items: center;
        height: 17px;
        padding: 0 5px 0 0;
        background: linear-gradient(#86a5d2 1px, #dde9f8 1px, #cfe0f5 6px, #b3cef2 8px, #d3e3f8);
      }

      span {
        padding: 0 6px;
        line-height: 15px;
        border-right: 1px solid #a9c3e8;
        white-space: nowrap;
      }

      .views {
        display: flex;
        margin-left: auto;
        border-left: 1px solid #98b4dd;
        border-right: 1px solid #98b4dd;
      }

      .views button {
        width: 14px;
        height: 14px;
      }

      .views .on {
        background: #fbc35e;
      }

      label {
        padding: 0 5px;
      }

      input {
        appearance: none;
        width: 71px;
        height: 11px;
        margin: 0 2px;
        background: linear-gradient(#7390bd, #7390bd) center / 100% 1px no-repeat;
      }

      input::-webkit-slider-thumb {
        appearance: none;
        width: 7px;
        height: 10px;
        border: 1px solid #6681ad;
        border-radius: 1px 1px 4px 4px;
        background: #eaf2fc;
      }
    `;
  }

  template() {
    return /* html */ `
    <span>Page: 7 of 8</span><span>Words: 939</span><span>English (United States)</span>
    <div class="views">
      <button class="on" aria-label="Print layout">${icon('print')}</button>
      <button aria-label="Full screen reading">${icon('reading')}</button>
      <button aria-label="Web layout">${icon('web')}</button>
      <button aria-label="Outline">${icon('outline')}</button>
      <button aria-label="Draft">${icon('draft')}</button>
    </div>
    <label for="zoom">110%</label>
    <button aria-label="Zoom out">${icon('minus')}</button>
    <input id="zoom" type="range" min="0" max="100" value="50">
    <button aria-label="Zoom in">${icon('plus')}</button>`;
  }
}

class TaskBar extends BaseElement {
  static get styles() {
    return /* css */ `
      :host {
        display: flex;
        height: 30px;
        background: #1a292c;
        color: #fff;
      }

      .start {
        width: 36px;
      }

      .search {
        flex: 0 0 258px;
        display: flex;
        align-items: center;
        gap: 7px;
        padding-left: 9px;
        background: #f2f2f2;
        border-bottom: 1px solid #ccc;
      }

      .search input {
        flex: 1;
        min-width: 0;
        border: 0;
        padding: 0;
        background: none;
        font: 11px Lato, "Open Sans", sans-serif;
      }

      .search input::placeholder {
        color: #444;
      }

      .apps {
        display: flex;
      }

      .apps button {
        width: 37px;
        border-bottom: 2px solid transparent;
      }

      .apps .open {
        border-color: #6fb3e0;
      }

      .apps .current {
        background: #46555a;
      }

      .zalo {
        width: 18px;
        height: 18px;
        border-radius: 7px;
        background: #fff;
        color: #0f6cf0;
        font-size: 7px;
        line-height: 18px;
      }

      .tray {
        margin-left: auto;
        display: flex;
        align-items: center;
        gap: 8px;
        font-size: 8px;
        line-height: 13px;
        text-align: center;
      }

      .note {
        position: relative;
        width: 31px;
        height: 30px;
        padding-right: 12px;
        border-right: 1px solid #6d777a;
        margin-right: 2px;
      }

      .badge {
        position: absolute;
        right: 8px;
        bottom: 3px;
        width: 13px;
        height: 13px;
        border-radius: 50%;
        background: #5c6568;
      }
    `;
  }

  template() {
    return /* html */ `
    <button class="start" aria-label="Start">${icon('windows')}</button>
    <div class="search">${icon('search')}<input type="text" placeholder="Type here to search" aria-label="Search"></div>
    <div class="apps">
      <button aria-label="Task view">${icon('taskview')}</button>
      <button aria-label="Edge">${icon('edge')}</button>
      <button aria-label="Groove">${icon('groove')}</button>
      <button class="open" aria-label="Chrome">${icon('chrome')}</button>
      <button class="open"><b class="zalo">Zalo</b></button>
      <button class="open current" aria-label="Word">${icon('word')}</button>
    </div>
    <div class="tray">
      ${icon('chevron')}${icon('battery')}${icon('wifi')}
      <div>ENG<br>INTL</div>
      <div>3:56 PM<br>10/31/2020</div>
      <button class="note">${icon('notes')}<span class="badge">19</span></button>
    </div>`;
  }
}

class WordDesktop extends BaseElement {
  static get styles() {
    return /* css */ `
      :host {
        display: flex;
        flex-direction: column;
        height: 100vh;
      }
    `;
  }

  template() {
    return /* html */ `
    <title-bar></title-bar>
    <ribbon-tabs></ribbon-tabs>
    <word-ribbon></word-ribbon>
    <word-workspace></word-workspace>
    <status-bar></status-bar>
    <task-bar></task-bar>`;
  }
}

customElements.define('title-bar', TitleBar);
customElements.define('ribbon-tabs', RibbonTabs);
customElements.define('ribbon-group', RibbonGroup);
customElements.define('style-card', StyleCard);
customElements.define('word-ribbon', WordRibbon);
customElements.define('word-ruler', WordRuler);
customElements.define('fill-in', FillIn);
customElements.define('doc-page', DocPage);
customElements.define('scroll-bar', ScrollBar);
customElements.define('word-workspace', WordWorkspace);
customElements.define('status-bar', StatusBar);
customElements.define('task-bar', TaskBar);
customElements.define('word-desktop', WordDesktop);
</script>
</body>
</html>
